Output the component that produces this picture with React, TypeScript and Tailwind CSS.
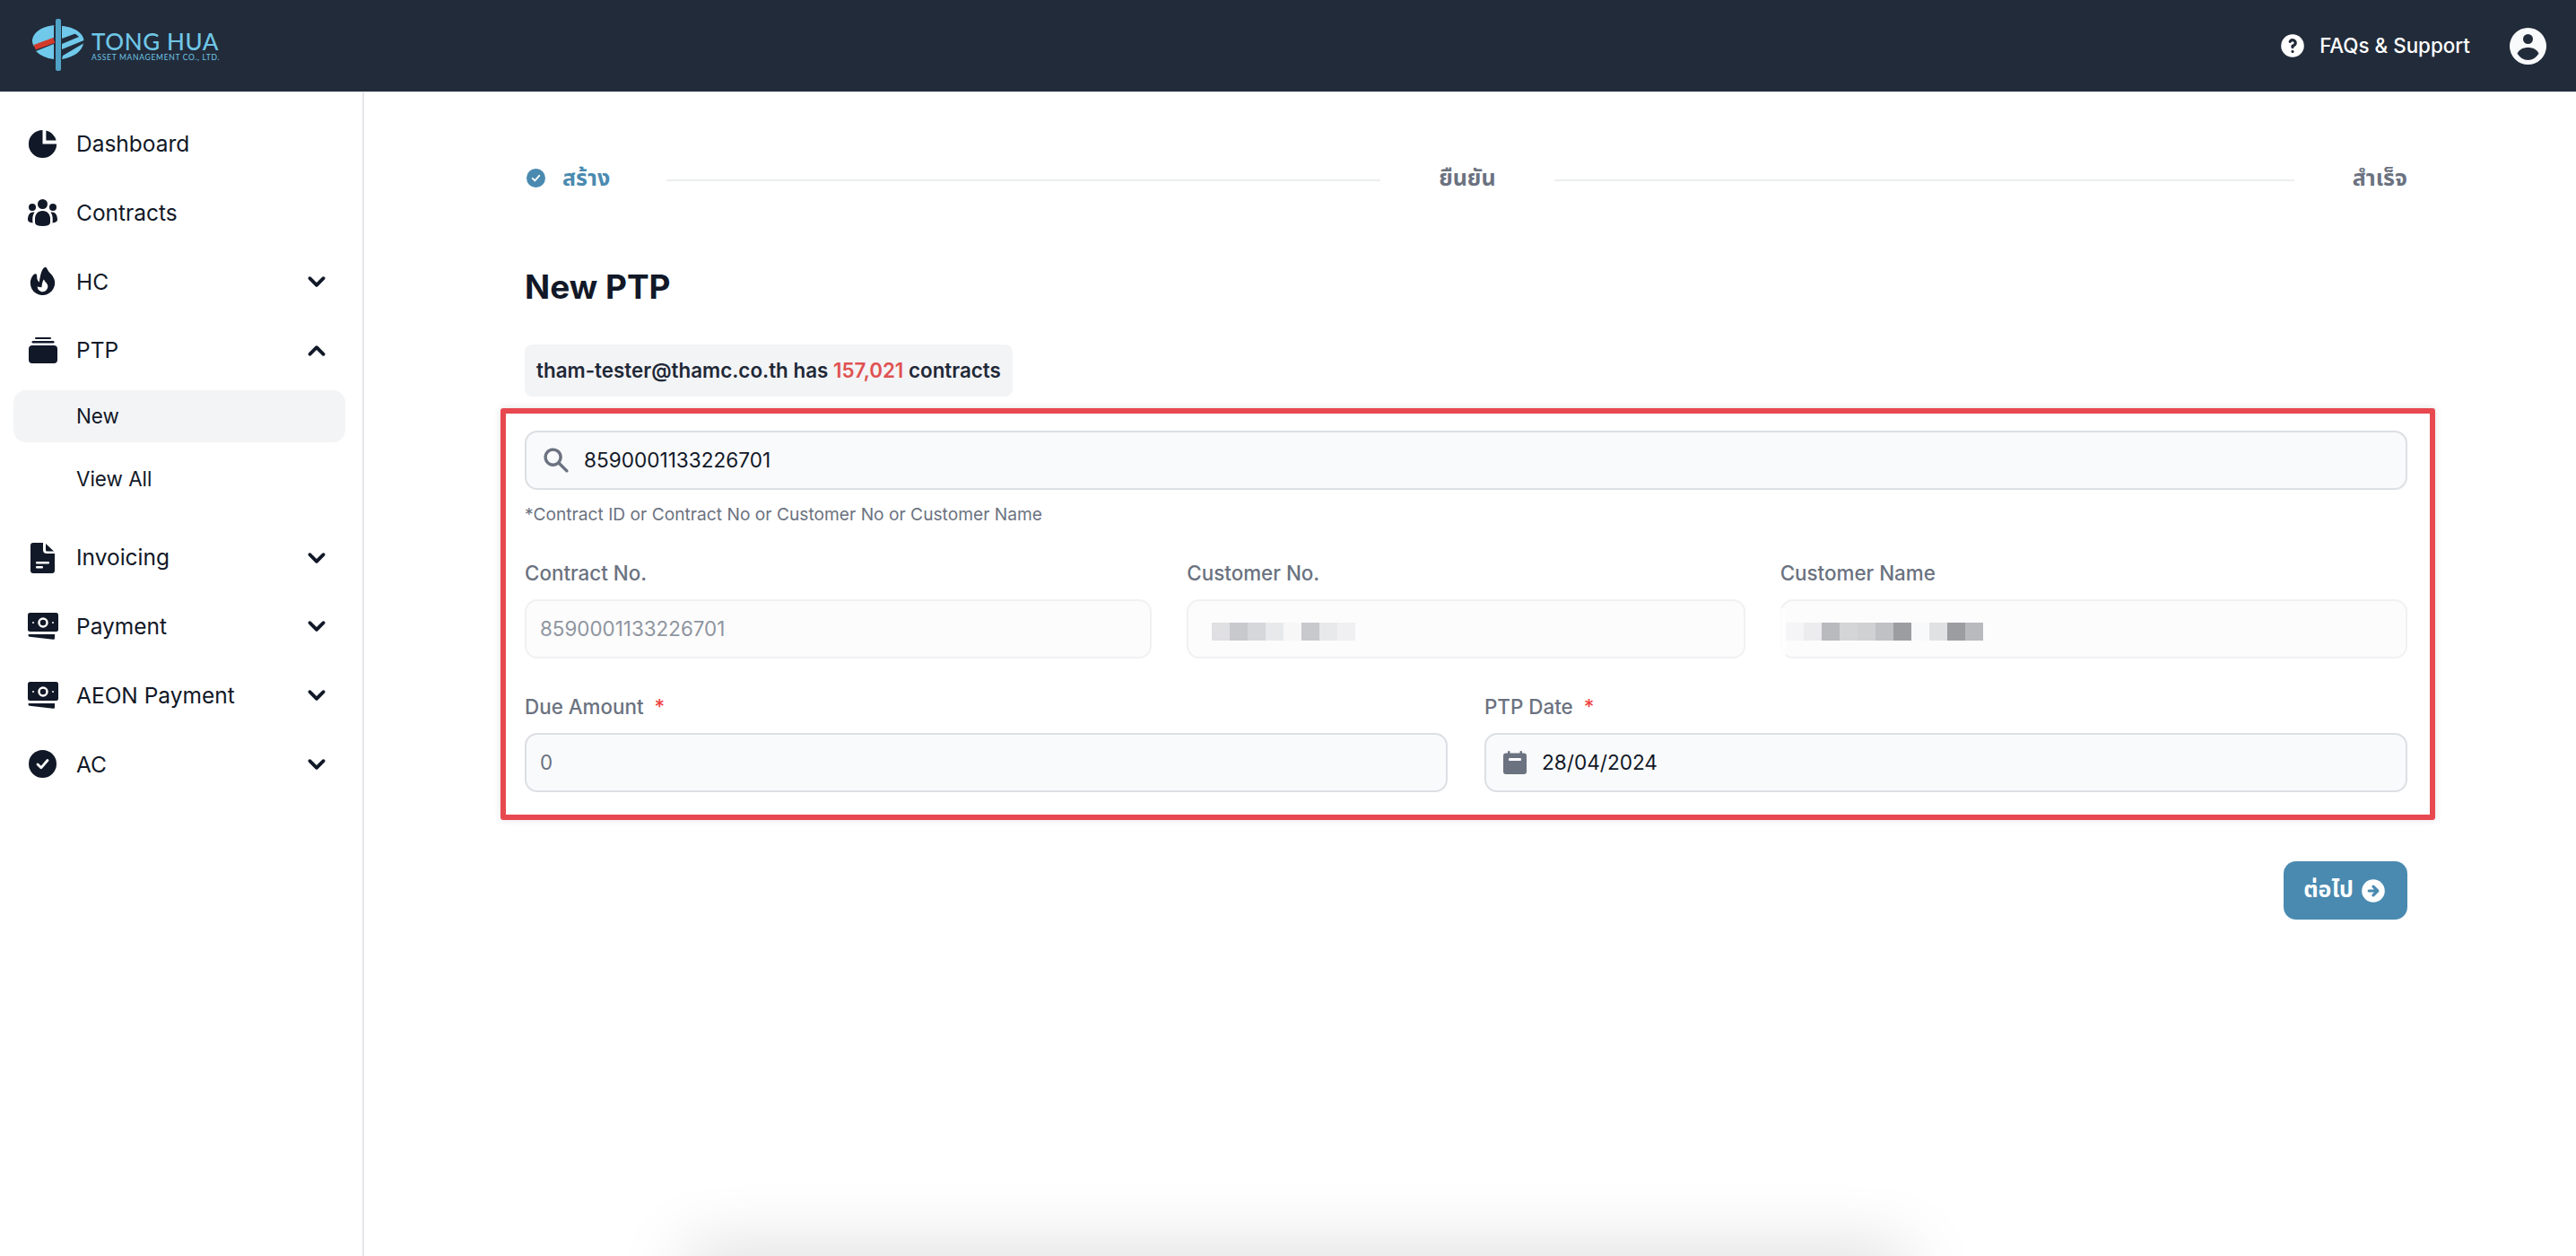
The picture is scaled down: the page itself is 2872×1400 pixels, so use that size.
import React from "react";
import { HiChartPie, HiFire, HiChevronDown, HiChevronUp, HiQuestionMarkCircle, HiSearch, HiArrowCircleRight } from "react-icons/hi";

const thai = '"Noto Sans Thai", "Noto Sans", "DejaVu Sans", sans-serif';

const Slot = ({ children }: { children: React.ReactNode }) => (
  <div className="flex h-[39px] w-[39px] shrink-0 items-center justify-center">{children}</div>
);

const ChartIcon = () => <HiChartPie className="h-[39px] w-[39px] shrink-0 text-[#111827]" />;
const FireIcon = () => <HiFire className="h-[39px] w-[39px] shrink-0 text-[#111827]" />;

const UsersIcon = () => (
  <Slot>
    <svg width="33" height="30" viewBox="0 0 33 30" fill="#111827">
      <circle cx="16.500" cy="5.500" r="5.500" />
      <circle cx="5" cy="9" r="4" />
      <circle cx="28" cy="9" r="4" />
      <path d="M16.500 13C11 13 8 17 8 22V26Q8 30 16.500 30Q25 30 25 26V22C25 17 22 13 16.500 13Z" />
      <path d="M5.500 14.500C2 14.500 0 18.500 0 23Q0 25.500 5.500 26.500C5 22 5 18 7.500 14.500Z" />
      <path d="M27.500 14.500C31 14.500 33 18.500 33 23Q33 25.500 27.500 26.500C28 22 28 18 25.500 14.500Z" />
    </svg>
  </Slot>
);

const StackIcon = () => (
  <Slot>
    <svg width="32" height="29" viewBox="0 0 32 29" fill="#111827">
      <rect x="7" y="0" width="18" height="2" rx="1" />
      <rect x="3.500" y="4" width="25" height="2.500" rx="1.200" />
      <rect x="0" y="9" width="32" height="20" rx="4" />
    </svg>
  </Slot>
);

const FileIcon = () => (
  <Slot>
    <svg width="27" height="34" viewBox="0 0 27 34" fill="#111827">
      <path d="M3 0H14V8Q14 12 18 12H27V31Q27 34 24 34H3Q0 34 0 31V3Q0 0 3 0Z" />
      <path d="M17 1L26 9.500H18.500Q17 9.500 17 8Z" />
      <rect x="6" y="21" width="15" height="2.500" rx="1" fill="#fff" />
      <rect x="6" y="26" width="8" height="2.500" rx="1" fill="#fff" />
    </svg>
  </Slot>
);

const CashIcon = () => (
  <Slot>
    <svg width="34" height="30" viewBox="0 0 34 30" fill="#111827">
      <rect x="0" y="0" width="34" height="21" rx="2.500" />
      <circle cx="17" cy="11" r="4.500" fill="none" stroke="#fff" strokeWidth="2.500" />
      <circle cx="6" cy="11" r="1" fill="#fff" />
      <circle cx="28" cy="11" r="1" fill="#fff" />
      <path d="M1 24H30V28.500Q30 30 28 29.700L2 26.800Q0.500 26.500 0.500 25Q0.500 24 1 24Z" />
    </svg>
  </Slot>
);

const CheckDisc = ({ size, fill }: { size: number; fill: string }) => (
  <svg width={size} height={size} viewBox="0 0 31 31" className="shrink-0">
    <circle cx="15.500" cy="15.500" r="15.500" fill={fill} />
    <path d="M10 16L13.800 19.800L21 11.500" fill="none" stroke="#fff" strokeWidth="2.800" strokeLinecap="round" strokeLinejoin="round" />
  </svg>
);

const AcIcon = () => (
  <Slot>
    <CheckDisc size={31} fill="#111827" />
  </Slot>
);

function NavItem({ icon: Icon, label, chevron }: { icon: React.ComponentType; label: string; chevron?: "up" | "down" }) {
  return (
    <div className="flex h-[76.8px] items-center pl-[28px] pr-[32px]">
      <Icon />
      <span className="ml-[18px] flex-1 text-[24.5px] text-[#111827]">{label}</span>
      {chevron === "down" && <HiChevronDown className="h-[38px] w-[38px] text-[#111827]" />}
      {chevron === "up" && <HiChevronUp className="h-[38px] w-[38px] text-[#111827]" />}
    </div>
  );
}

function Label({ children, req }: { children: React.ReactNode; req?: boolean }) {
  return (
    <div className="mb-[15px] flex h-[28px] items-center text-[22.4px] font-medium text-[#6b7280]">
      {children}
      {req && <span className="ml-[12px] text-[#ef4444]">*</span>}
    </div>
  );
}

function Blocks({ colors }: { colors: string[] }) {
  return (
    <div className="mt-[5px] flex h-[20px]">
      {colors.map((c, i) => (
        <div key={i} className="h-full w-[20px]" style={{ background: c }} />
      ))}
    </div>
  );
}

const Step = ({ children }: { children: React.ReactNode }) => (
  <span className="mb-[2px] text-[25px] font-bold text-[#6b7280]" style={{ fontFamily: thai }}>{children}</span>
);

const disabledBox = "flex h-[66px] items-center rounded-[14px] border-2 border-[#f0f1f3] bg-[#fcfcfc]";
const activeBox = "flex h-[66px] items-center rounded-[14px] border-2 border-[#dcdfe3] bg-[#f9fafb]";

export default function App() {
  return (
    <div className="relative flex h-[1400px] flex-col overflow-hidden bg-white font-['Inter',sans-serif]">
      <header className="flex h-[102px] shrink-0 items-center justify-between bg-[#222b3a] pl-[36px] pr-[33px]">
        <div className="flex items-center">
          <svg width="58" height="60" viewBox="0 0 58 60" className="shrink-0">
            <path d="M26 7 C10 8 0 16 0 25 C0 27 1 29 2 31 L24 21 L24 28 L4 36 C9 41 16 44 24 45 L24 7 Z" fill="#70c9ea" />
            <rect x="2" y="25" width="23" height="6" transform="rotate(-20 13 28)" fill="#d23a2c" />
            <path d="M33 8 C47 9 57 16 57.500 24 L33 34 L33 28 L52 20 C47 15 40 12 33 11 Z" fill="#70c9ea" />
            <path d="M33 8 L33 22 L52 15 C47 11 40 9 33 8 Z" fill="#70c9ea" />
            <path d="M57 27 C56 36 46 43 33 45 L34 41 L56 28 Z" fill="#70c9ea" />
            <rect x="26" y="0" width="6" height="58" rx="2" fill="#4fa3c7" />
          </svg>
          <div className="ml-[8px] flex flex-col text-[#6fc6e6]">
            <span className="text-[26px] leading-[26px] font-medium tracking-[0.6px] font-['Lato',sans-serif]">TONG HUA</span>
            <span className="text-[8.5px] leading-[10px] tracking-[0.7px] font-['Lato',sans-serif]">ASSET MANAGEMENT CO., LTD.</span>
          </div>
        </div>
        <div className="flex items-center">
          <HiQuestionMarkCircle className="h-[32px] w-[32px] text-white" />
          <span className="ml-[14px] text-[22.4px] font-medium text-white">FAQs &amp; Support</span>
          <svg width="41" height="41" viewBox="0 0 41 41" className="ml-[44px] shrink-0">
            <circle cx="20.500" cy="20.500" r="20.500" fill="#f9fafb" />
            <circle cx="20.500" cy="12.500" r="5.500" fill="#222b3a" />
            <path d="M8.500 28.500C11 24 15 22 20.500 22C26 22 30 24 32.500 28.500C30 33 25.500 36 20.500 36C15.500 36 11 33 8.500 28.500Z" fill="#222b3a" />
          </svg>
        </div>
      </header>
      <div className="flex min-h-0 flex-1 border-t border-[#e5e7eb]">
        <aside className="w-[406px] shrink-0 border-r-2 border-[#e5e7eb] pt-[19px]">
          <NavItem icon={ChartIcon} label="Dashboard" />
          <NavItem icon={UsersIcon} label="Contracts" />
          <NavItem icon={FireIcon} label="HC" chevron="down" />
          <NavItem icon={StackIcon} label="PTP" chevron="up" />
          <div className="mx-[15px] mt-[6px] flex h-[58px] w-[370px] items-center rounded-[14px] bg-[#f3f4f6] pl-[70px] text-[22.4px] text-[#111827]">New</div>
          <div className="mx-[15px] mt-[12px] flex h-[58px] w-[370px] items-center pl-[70px] text-[22.4px] text-[#111827]">View All</div>
          <div className="mt-[20px]">
            <NavItem icon={FileIcon} label="Invoicing" chevron="down" />
            <NavItem icon={CashIcon} label="Payment" chevron="down" />
            <NavItem icon={CashIcon} label="AEON Payment" chevron="down" />
            <NavItem icon={AcIcon} label="AC" chevron="down" />
          </div>
        </aside>
        <main className="relative min-w-0 flex-1 pl-[179px] pr-[188px] pt-[76px]">
          <div className="flex h-[44px] items-center">
            <div className="mb-[5px] ml-[2px] shrink-0">
              <CheckDisc size={21} fill="#4a8ab0" />
            </div>
            <span className="mb-[2px] ml-[19px] text-[25px] font-bold text-[#4a8ab0]" style={{ fontFamily: thai }}>สร้าง</span>
            <div className="ml-[63px] mr-[65px] h-[2px] w-[796px] bg-[#eceef0]" />
            <Step>ยืนยัน</Step>
            <div className="mx-[65px] h-[2px] flex-1 bg-[#eceef0]" />
            <Step>สำเร็จ</Step>
          </div>
          <h1 className="mt-[74px] text-[37px] leading-[46px] font-bold text-[#111827]">New PTP</h1>
          <div className="mt-[41px] inline-flex h-[58px] items-center rounded-[8px] bg-[#f3f4f6] px-[13px] text-[22.4px] font-semibold text-[#1f2937]">
            tham-tester@thamc.co.th has&nbsp;<span className="text-[#e05252]">157,021</span>&nbsp;contracts
          </div>
          <div className="-ml-[27px] -mr-[31px] mt-[13px] rounded-[3px] border-[6px] border-[#e8484f] pl-[21px] pr-[25px] pt-[19px] pb-[25px] shadow-[0_0_8px_rgba(0,0,0,0.12)]">
            <div className={`${activeBox} pl-[16px] text-[22.6px] text-[#111827]`}>
              <HiSearch className="h-[34px] w-[34px] text-[#6b7280]" />
              <span className="ml-[14px]">8590001133226701</span>
            </div>
            <p className="mt-[15px] h-[24px] text-[19.2px] leading-[24px] text-[#6b7280]">*Contract ID or Contract No or Customer No or Customer Name</p>
            <div className="mt-[40px] grid grid-cols-[699fr_622fr_699fr] gap-x-[39px]">
              <div>
                <Label>Contract No.</Label>
                <div className={`${disabledBox} pl-[15px] text-[22.4px] text-[#8f95a0]`}>8590001133226701</div>
              </div>
              <div>
                <Label>Customer No.</Label>
                <div className={`${disabledBox} pl-[26px]`}>
                  <Blocks colors={["#e0e0e3", "#c8c9cd", "#d6d7db", "#e8e9eb", "#f7f7f8", "#c8c9cd", "#e8e9eb", "#f0f0f2"]} />
                </div>
              </div>
              <div>
                <Label>Customer Name</Label>
                <div className={`${disabledBox} relative pl-[4px]`}>
                  <Blocks colors={["#f5f5f7", "#ececee", "#b9babe", "#d4d5d7", "#d0d1d3", "#c0c1c5", "#9c9da1", "#f8f9fa", "#e0e1e3", "#9b9da1", "#b9babe"]} />
                  <div className="absolute -bottom-[2px] -left-[2px] top-[8px] w-[6px] bg-white/80" />
                </div>
              </div>
            </div>
            <div className="mt-[40px] grid grid-cols-2 gap-x-[41px]">
              <div>
                <Label req>Due Amount</Label>
                <div className={`${activeBox} pl-[15px] text-[22.4px] text-[#6b7280]`}>0</div>
              </div>
              <div>
                <Label req>PTP Date</Label>
                <div className={`${activeBox} pl-[19px] text-[22.6px] text-[#111827]`}>
                  <svg width="26" height="26" viewBox="0 0 26 26" className="shrink-0" fill="#6b7280">
                    <rect x="5" y="0" width="2.500" height="5" rx="1" />
                    <rect x="18.500" y="0" width="2.500" height="5" rx="1" />
                    <rect x="0" y="2.500" width="26" height="23.500" rx="3" />
                    <rect x="6" y="8" width="14" height="3" rx="1" fill="#fff" />
                  </svg>
                  <span className="ml-[17px]">28/04/2024</span>
                </div>
              </div>
            </div>
          </div>
          <div className="mt-[46px] flex justify-end">
            <div className="flex h-[65px] w-[138px] items-center justify-center rounded-[14px] bg-[#4a8ab0] text-[25px] font-bold text-white">
              <span style={{ fontFamily: thai }}>ต่อไป</span>
              <HiArrowCircleRight className="ml-[6px] h-[32px] w-[32px]" />
            </div>
          </div>
          <div className="absolute left-[360px] top-[1298px] h-[40px] w-[1360px] shadow-[0_0_80px_rgba(0,0,0,0.22)]" />
        </main>
      </div>
    </div>
  );
}
